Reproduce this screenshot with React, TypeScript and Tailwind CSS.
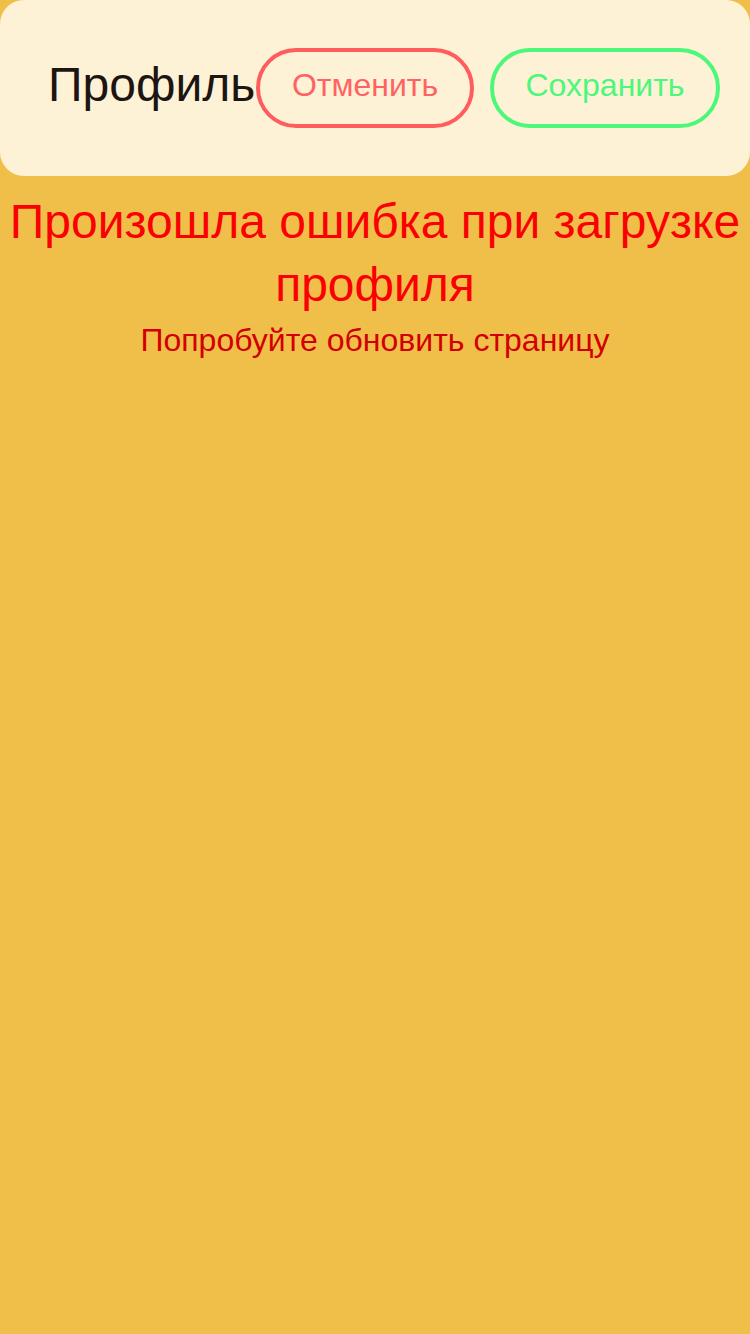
export default function App() {
  return (
    <div className="min-h-[1334px] w-full bg-[#f0bf4a] font-['Liberation_Sans',Arial,sans-serif]">
      <div className="flex h-[176px] items-center rounded-3xl bg-[#fef2d6] pl-12 pr-[30px]">
        <div className="mb-[6px] flex-1 text-[48px] leading-none text-[#1c1512]">Профиль</div>
        <div className="flex gap-4">
          <button className="flex h-20 w-[218px] items-center justify-center rounded-full border-4 border-[#ff5c5c] pb-[6px] text-[32px] text-[#ff6262]">
            Отменить
          </button>
          <button className="flex h-20 w-[230px] items-center justify-center rounded-full border-4 border-[#4cf77a] pb-[6px] text-[32px] text-[#4cf77a]">
            Сохранить
          </button>
        </div>
      </div>
      <div className="mt-[14px] flex flex-col items-center text-center">
        <div className="text-[48px] leading-[63px] text-[#fb0000]">Произошла ошибка при загрузке профиля</div>
        <div className="text-[32px] leading-[48px] text-[#d20000]">Попробуйте обновить страницу</div>
      </div>
    </div>
  );
}
